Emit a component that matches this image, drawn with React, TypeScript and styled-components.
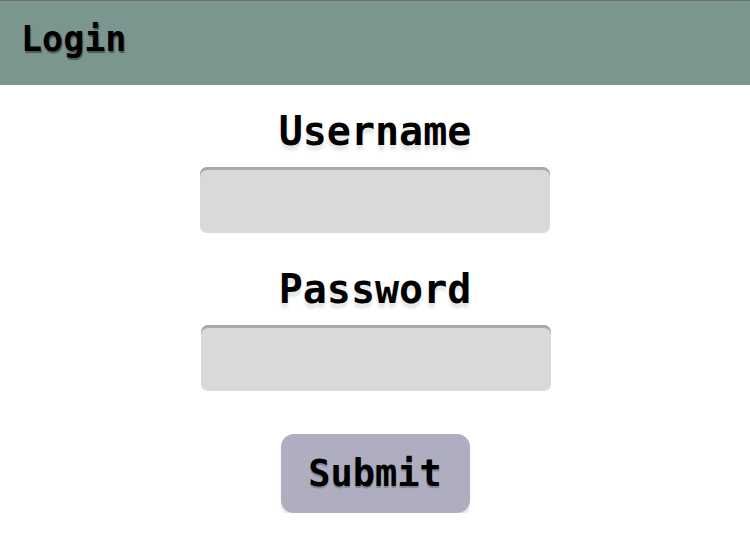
import styled, { createGlobalStyle } from "styled-components";

const GlobalStyle = createGlobalStyle`
    html, body {
        margin: 0;
        padding: 0;
        background: #ffffff;
        font-family: "DejaVu Sans Mono", monospace;
    }
`;

const Header = styled.header`
    height: 84px;
    border-top: 1px solid #6f6f6f;
    background-color: #7b968f;
    display: flex;
    align-items: flex-start;
    padding: 0 21px;
    box-sizing: content-box;
`;

const Title = styled.h1`
    margin: 18px 0 0;
    font-size: 35px;
    font-weight: bold;
    color: #000;
    text-shadow: 1px 2px 1px rgba(0, 0, 0, 0.4);
`;

const Form = styled.form`
    display: flex;
    flex-direction: column;
    align-items: center;
    padding-top: 23px;
`;

const Label = styled.label`
    font-size: 40px;
    font-weight: bold;
    line-height: 46px;
    color: #000;
    text-shadow: 0 5px 3px rgba(0, 0, 0, 0.1);
`;

const Field = styled.input<{ $shift?: number }>`
    width: 350px;
    height: 66px;
    margin: 13px 0 33px ${(p) => p.$shift ?? 0}px;
    box-sizing: border-box;
    border: none;
    border-radius: 7px;
    background: #d9d9d9;
    box-shadow: inset 0 3px 0 #a9a9a9;
    outline: none;
    font-family: inherit;
    font-size: 20px;
    padding: 0 12px;
`;

const Submit = styled.button`
    margin-top: 10px;
    width: 189px;
    height: 79px;
    border: none;
    border-radius: 13px;
    background: #aeaec0;
    box-shadow: 0 4px 2px rgba(0, 0, 0, 0.1);
    font-family: inherit;
    font-size: 37px;
    font-weight: bold;
    color: #000;
    text-shadow: 0 2px 1px rgba(0, 0, 0, 0.25);
    cursor: pointer;
`;

export default function App() {
    return (
        <>
            <GlobalStyle />
            <Header>
                <Title>Login</Title>
            </Header>
            <Form onSubmit={(e) => e.preventDefault()}>
                <Label htmlFor="username">Username</Label>
                <Field id="username" type="text" />
                <Label htmlFor="password">Password</Label>
                <Field id="password" type="password" $shift={2} />
                <Submit type="submit">Submit</Submit>
            </Form>
        </>
    );
}
